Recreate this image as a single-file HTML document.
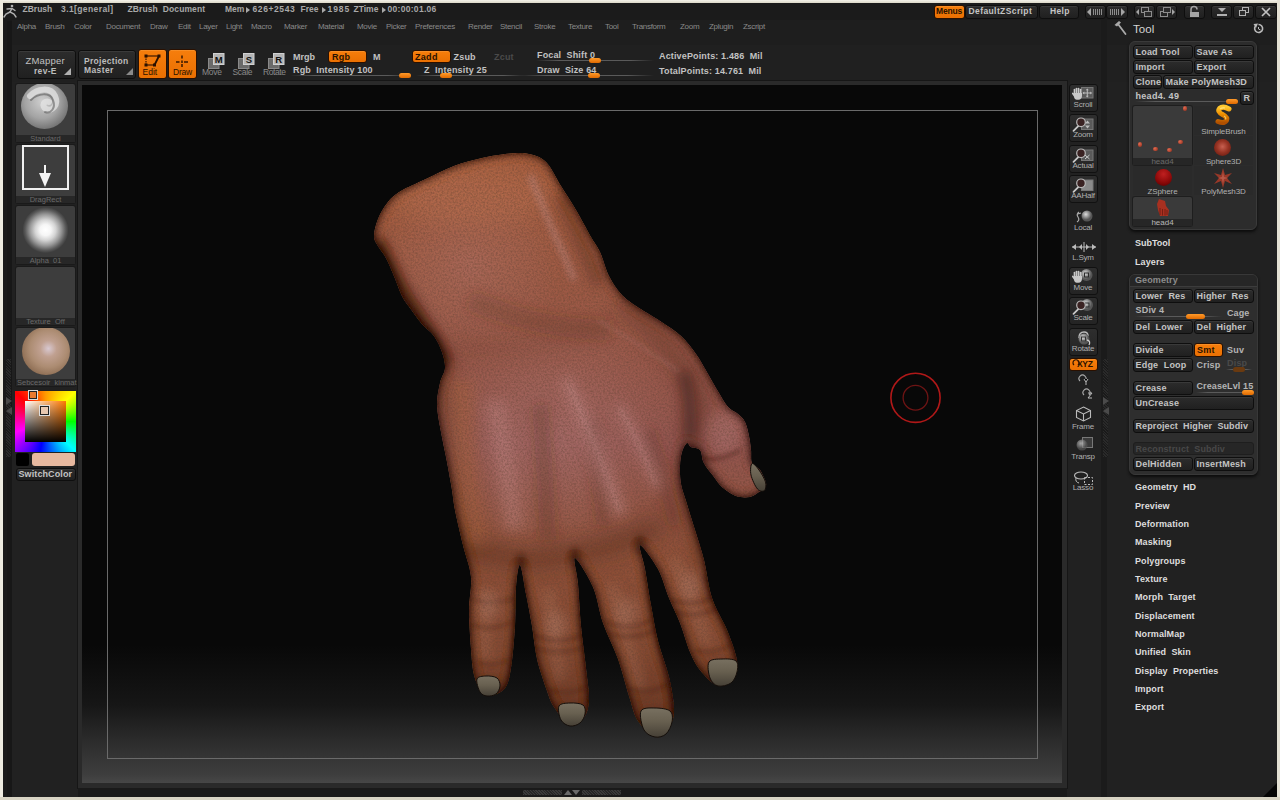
<!DOCTYPE html>
<html><head><meta charset="utf-8"><style>
html,body{margin:0;padding:0;width:1280px;height:800px;overflow:hidden;background:#212121}
.r{position:absolute}
.t{position:absolute;white-space:nowrap;font-family:"Liberation Sans", sans-serif}
svg.r{overflow:visible}
</style></head><body>
<div class="r" style="left:0px;top:0px;width:1280px;height:800px;background:#212121"></div>
<div class="r" style="left:3px;top:3px;width:1274px;height:17px;background:#1b1b1b"></div>
<div class="r" style="left:3px;top:20px;width:1274px;height:25px;background:#1e1e1e"></div>
<div class="r" style="left:3px;top:45px;width:1274px;height:37px;background:#202020"></div>
<div class="r" style="left:3px;top:20px;width:9px;height:777px;background:#1a1a1a"></div>
<div class="r" style="left:7px;top:21px;width:5px;height:776px;background:#171717"></div>
<div class="r" style="left:12px;top:82px;width:66px;height:715px;background:#212121"></div>
<div class="r" style="left:1101px;top:20px;width:6px;height:777px;background:#1b1b1b"></div>
<div class="r" style="left:0px;top:0px;width:1280px;height:3px;background:linear-gradient(#f4f2ea,#dcd8c8)"></div>
<div class="r" style="left:0px;top:0px;width:3px;height:800px;background:#eeebe0"></div>
<div class="r" style="left:1277px;top:0px;width:3px;height:800px;background:#e4e1d4"></div>
<div class="r" style="left:0px;top:797px;width:1280px;height:3px;background:#d8d4c4"></div>
<svg class="r" style="left:1263px;top:783px" width="14" height="14"><polygon points="14,0 14,14 0,14" fill="#050505"/></svg>
<svg class="r" style="left:3px;top:4px" width="15" height="14" viewBox="0 0 15 14">
<g fill="none" stroke="#b0b0b0" stroke-width="1.4" stroke-linecap="round">
<circle cx="9" cy="2" r="1.3" fill="#b0b0b0" stroke="none"/>
<path d="M4 5 L9 4.5 L12 6.5"/><path d="M9 4.5 L7 8 L11 10 L13 13"/><path d="M7 8 L3 10 L1 13"/>
</g></svg>
<div class="t" style="left:22.5px;top:5px;font-size:8.5px;line-height:8.5px;font-weight:bold;color:#a8a8a8;letter-spacing:0px;">ZBrush</div>
<div class="t" style="left:61px;top:5px;font-size:8.5px;line-height:8.5px;font-weight:bold;color:#a8a8a8;letter-spacing:0.4px;">3.1[general]</div>
<div class="t" style="left:127.5px;top:5px;font-size:8.5px;line-height:8.5px;font-weight:bold;color:#a8a8a8;letter-spacing:0.1px;">ZBrush&nbsp;&nbsp;Document</div>
<div class="t" style="left:225px;top:5px;font-size:8.5px;line-height:8.5px;font-weight:bold;color:#a8a8a8;letter-spacing:0px;">Mem</div>
<div class="t" style="left:252.5px;top:5px;font-size:8.5px;line-height:8.5px;font-weight:bold;color:#a8a8a8;letter-spacing:0.6px;">626+2543</div>
<div class="t" style="left:300.5px;top:5px;font-size:8.5px;line-height:8.5px;font-weight:bold;color:#a8a8a8;letter-spacing:0px;">Free</div>
<div class="t" style="left:327.5px;top:5px;font-size:8.5px;line-height:8.5px;font-weight:bold;color:#a8a8a8;letter-spacing:0.9px;">1985</div>
<div class="t" style="left:353.5px;top:5px;font-size:8.5px;line-height:8.5px;font-weight:bold;color:#a8a8a8;letter-spacing:0px;">ZTime</div>
<div class="t" style="left:387.5px;top:5px;font-size:8.5px;line-height:8.5px;font-weight:bold;color:#a8a8a8;letter-spacing:0.3px;">00:00:01.06</div>
<svg class="r" style="left:246px;top:7px" width="5" height="6"><polygon points="0,0 4,3 0,6" fill="#a8a8a8"/></svg>
<svg class="r" style="left:322px;top:7px" width="5" height="6"><polygon points="0,0 4,3 0,6" fill="#a8a8a8"/></svg>
<svg class="r" style="left:382px;top:7px" width="5" height="6"><polygon points="0,0 4,3 0,6" fill="#a8a8a8"/></svg>
<div class="r" style="left:934px;top:5px;width:29px;height:12px;border-radius:3px;background:linear-gradient(#f67e0c,#ea7002);border:1px solid #2a1000;box-shadow:inset 0 1px 0 rgba(255,190,110,.25);"></div>
<div class="t" style="left:936px;top:7px;font-size:8.5px;line-height:8.5px;font-weight:bold;color:#2a1200;letter-spacing:-0.2px;">Menus</div>
<div class="r" style="left:965px;top:5px;width:71px;height:12px;border-radius:3px;background:linear-gradient(#2c2c2c,#202020);border:1px solid #0e0e0e;box-shadow:inset 0 1px 0 rgba(255,255,255,.07);"></div>
<div class="t" style="left:968.5px;top:7px;font-size:8.5px;line-height:8.5px;font-weight:bold;color:#c4c4c4;letter-spacing:0.4px;">DefaultZScript</div>
<div class="r" style="left:1039px;top:5px;width:38px;height:12px;border-radius:3px;background:linear-gradient(#2c2c2c,#202020);border:1px solid #0e0e0e;box-shadow:inset 0 1px 0 rgba(255,255,255,.07);"></div>
<div class="t" style="left:1050px;top:7px;font-size:8.5px;line-height:8.5px;font-weight:bold;color:#c4c4c4;letter-spacing:0.3px;">Help</div>
<div class="r" style="left:1085px;top:5px;width:19px;height:12px;border-radius:3px;background:linear-gradient(#2c2c2c,#202020);border:1px solid #0e0e0e;box-shadow:inset 0 1px 0 rgba(255,255,255,.07);"></div>
<div class="r" style="left:1106px;top:5px;width:20px;height:12px;border-radius:3px;background:linear-gradient(#2c2c2c,#202020);border:1px solid #0e0e0e;box-shadow:inset 0 1px 0 rgba(255,255,255,.07);"></div>
<div class="r" style="left:1134px;top:5px;width:19px;height:12px;border-radius:3px;background:linear-gradient(#2c2c2c,#202020);border:1px solid #0e0e0e;box-shadow:inset 0 1px 0 rgba(255,255,255,.07);"></div>
<div class="r" style="left:1156px;top:5px;width:19px;height:12px;border-radius:3px;background:linear-gradient(#2c2c2c,#202020);border:1px solid #0e0e0e;box-shadow:inset 0 1px 0 rgba(255,255,255,.07);"></div>
<div class="r" style="left:1184px;top:5px;width:19px;height:12px;border-radius:3px;background:linear-gradient(#2c2c2c,#202020);border:1px solid #0e0e0e;box-shadow:inset 0 1px 0 rgba(255,255,255,.07);"></div>
<div class="r" style="left:1211px;top:5px;width:19px;height:12px;border-radius:3px;background:linear-gradient(#2c2c2c,#202020);border:1px solid #0e0e0e;box-shadow:inset 0 1px 0 rgba(255,255,255,.07);"></div>
<div class="r" style="left:1233px;top:5px;width:19px;height:12px;border-radius:3px;background:linear-gradient(#2c2c2c,#202020);border:1px solid #0e0e0e;box-shadow:inset 0 1px 0 rgba(255,255,255,.07);"></div>
<div class="r" style="left:1255px;top:5px;width:20px;height:12px;border-radius:3px;background:linear-gradient(#2c2c2c,#202020);border:1px solid #0e0e0e;box-shadow:inset 0 1px 0 rgba(255,255,255,.07);"></div>
<svg class="r" style="left:1087px;top:7px" width="18" height="10"><polygon points="0,5 4,1 4,9" fill="#a4a4a4"/><g stroke="#8c8c8c" stroke-width="1"><line x1="6.5" y1="2" x2="6.5" y2="8"/><line x1="8.5" y1="2" x2="8.5" y2="8"/><line x1="10.5" y1="2" x2="10.5" y2="8"/><line x1="12.5" y1="2" x2="12.5" y2="8"/><line x1="14.5" y1="2" x2="14.5" y2="8"/></g></svg>
<svg class="r" style="left:1108px;top:7px" width="18" height="10"><g stroke="#8c8c8c" stroke-width="1"><line x1="2.5" y1="2" x2="2.5" y2="8"/><line x1="4.5" y1="2" x2="4.5" y2="8"/><line x1="6.5" y1="2" x2="6.5" y2="8"/><line x1="8.5" y1="2" x2="8.5" y2="8"/><line x1="10.5" y1="2" x2="10.5" y2="8"/></g><polygon points="17,5 13,1 13,9" fill="#a4a4a4"/></svg>
<svg class="r" style="left:1136px;top:6px" width="18" height="12"><polygon points="0,6 3,3 3,9" fill="#a4a4a4"/><rect x="5.5" y="1.5" width="7" height="5" fill="none" stroke="#8c8c8c"/><rect x="8.5" y="5.5" width="7" height="5" fill="#2a2a2a" stroke="#8c8c8c"/></svg>
<svg class="r" style="left:1158px;top:6px" width="18" height="12"><rect x="2.5" y="5.5" width="7" height="5" fill="none" stroke="#8c8c8c"/><rect x="5.5" y="1.5" width="7" height="5" fill="#2a2a2a" stroke="#8c8c8c"/><polygon points="17,6 14,3 14,9" fill="#a4a4a4"/></svg>
<svg class="r" style="left:1188px;top:6px" width="14" height="12"><path d="M3 6 V3.5 A3 3 0 0 1 9 3.5" fill="none" stroke="#a4a4a4" stroke-width="1.5"/><rect x="2" y="6" width="9" height="5" fill="#a4a4a4"/></svg>
<svg class="r" style="left:1216px;top:7px" width="12" height="10"><polygon points="2,1 10,1 6,5" fill="#b0b0b0"/><rect x="1" y="7" width="10" height="2" fill="#b0b0b0"/></svg>
<svg class="r" style="left:1238px;top:6px" width="12" height="12"><rect x="4.5" y="1.5" width="6" height="5" fill="none" stroke="#b0b0b0"/><rect x="1.5" y="4.5" width="6" height="5" fill="#2a2a2a" stroke="#b0b0b0"/></svg>
<svg class="r" style="left:1260px;top:6px" width="12" height="12"><path d="M2 2 L10 10 M10 2 L2 10" stroke="#c0c0c0" stroke-width="1.7"/></svg>
<div class="t" style="left:17px;top:23px;font-size:8px;line-height:8px;font-weight:normal;color:#8a8a8a;letter-spacing:-0.3px;">Alpha</div>
<div class="t" style="left:45px;top:23px;font-size:8px;line-height:8px;font-weight:normal;color:#8a8a8a;letter-spacing:-0.3px;">Brush</div>
<div class="t" style="left:74px;top:23px;font-size:8px;line-height:8px;font-weight:normal;color:#8a8a8a;letter-spacing:-0.3px;">Color</div>
<div class="t" style="left:106px;top:23px;font-size:8px;line-height:8px;font-weight:normal;color:#8a8a8a;letter-spacing:-0.3px;">Document</div>
<div class="t" style="left:150px;top:23px;font-size:8px;line-height:8px;font-weight:normal;color:#8a8a8a;letter-spacing:-0.3px;">Draw</div>
<div class="t" style="left:178px;top:23px;font-size:8px;line-height:8px;font-weight:normal;color:#8a8a8a;letter-spacing:-0.3px;">Edit</div>
<div class="t" style="left:199px;top:23px;font-size:8px;line-height:8px;font-weight:normal;color:#8a8a8a;letter-spacing:-0.3px;">Layer</div>
<div class="t" style="left:226px;top:23px;font-size:8px;line-height:8px;font-weight:normal;color:#8a8a8a;letter-spacing:-0.3px;">Light</div>
<div class="t" style="left:251px;top:23px;font-size:8px;line-height:8px;font-weight:normal;color:#8a8a8a;letter-spacing:-0.3px;">Macro</div>
<div class="t" style="left:284px;top:23px;font-size:8px;line-height:8px;font-weight:normal;color:#8a8a8a;letter-spacing:-0.3px;">Marker</div>
<div class="t" style="left:318px;top:23px;font-size:8px;line-height:8px;font-weight:normal;color:#8a8a8a;letter-spacing:-0.3px;">Material</div>
<div class="t" style="left:357px;top:23px;font-size:8px;line-height:8px;font-weight:normal;color:#8a8a8a;letter-spacing:-0.3px;">Movie</div>
<div class="t" style="left:386px;top:23px;font-size:8px;line-height:8px;font-weight:normal;color:#8a8a8a;letter-spacing:-0.3px;">Picker</div>
<div class="t" style="left:415px;top:23px;font-size:8px;line-height:8px;font-weight:normal;color:#8a8a8a;letter-spacing:-0.3px;">Preferences</div>
<div class="t" style="left:468px;top:23px;font-size:8px;line-height:8px;font-weight:normal;color:#8a8a8a;letter-spacing:-0.3px;">Render</div>
<div class="t" style="left:500px;top:23px;font-size:8px;line-height:8px;font-weight:normal;color:#8a8a8a;letter-spacing:-0.3px;">Stencil</div>
<div class="t" style="left:534px;top:23px;font-size:8px;line-height:8px;font-weight:normal;color:#8a8a8a;letter-spacing:-0.3px;">Stroke</div>
<div class="t" style="left:568px;top:23px;font-size:8px;line-height:8px;font-weight:normal;color:#8a8a8a;letter-spacing:-0.3px;">Texture</div>
<div class="t" style="left:605px;top:23px;font-size:8px;line-height:8px;font-weight:normal;color:#8a8a8a;letter-spacing:-0.3px;">Tool</div>
<div class="t" style="left:632px;top:23px;font-size:8px;line-height:8px;font-weight:normal;color:#8a8a8a;letter-spacing:-0.3px;">Transform</div>
<div class="t" style="left:680px;top:23px;font-size:8px;line-height:8px;font-weight:normal;color:#8a8a8a;letter-spacing:-0.3px;">Zoom</div>
<div class="t" style="left:709px;top:23px;font-size:8px;line-height:8px;font-weight:normal;color:#8a8a8a;letter-spacing:-0.3px;">Zplugin</div>
<div class="t" style="left:743px;top:23px;font-size:8px;line-height:8px;font-weight:normal;color:#8a8a8a;letter-spacing:-0.3px;">Zscript</div>
<div class="r" style="left:17px;top:50px;width:57px;height:27px;border-radius:3px;background:linear-gradient(#2c2c2c,#202020);border:1px solid #0e0e0e;box-shadow:inset 0 1px 0 rgba(255,255,255,.07);"></div>
<div class="t" style="left:25.5px;top:56px;font-size:9.5px;line-height:9.5px;font-weight:normal;color:#c0c0c0;letter-spacing:0.2px;">ZMapper</div>
<div class="t" style="left:34px;top:67px;font-size:8.5px;line-height:8.5px;font-weight:bold;color:#bdbdbd;letter-spacing:0.3px;">rev-E</div>
<svg class="r" style="left:64px;top:68px" width="8" height="8"><polygon points="7,0 7,7 0,7" fill="#b0b0b0"/></svg>
<div class="r" style="left:78px;top:50px;width:56px;height:27px;border-radius:3px;background:linear-gradient(#2c2c2c,#202020);border:1px solid #0e0e0e;box-shadow:inset 0 1px 0 rgba(255,255,255,.07);"></div>
<div class="t" style="left:84px;top:56.5px;font-size:8.5px;line-height:8.5px;font-weight:bold;color:#bdbdbd;letter-spacing:0.3px;">Projection</div>
<div class="t" style="left:84px;top:66px;font-size:8.5px;line-height:8.5px;font-weight:bold;color:#bdbdbd;letter-spacing:0.4px;">Master</div>
<svg class="r" style="left:126px;top:68px" width="8" height="8"><polygon points="7,0 7,7 0,7" fill="#8a8a8a"/></svg>
<div class="r" style="left:138px;top:49px;width:27px;height:28px;border-radius:3px;background:linear-gradient(#f67e0c,#ea7002);border:1px solid #2a1000;box-shadow:inset 0 1px 0 rgba(255,190,110,.25);"></div>
<div class="r" style="left:168px;top:49px;width:27px;height:28px;border-radius:3px;background:linear-gradient(#f67e0c,#ea7002);border:1px solid #2a1000;box-shadow:inset 0 1px 0 rgba(255,190,110,.25);"></div>
<svg class="r" style="left:140px;top:52px" width="24" height="16"><g stroke="#2a1000" stroke-width="1.1"><line x1="6" y1="4" x2="19" y2="4"/><line x1="6" y1="4" x2="6" y2="13" stroke-dasharray="1.5 1"/><line x1="6" y1="13" x2="14.5" y2="13"/><line x1="19" y1="4" x2="14.5" y2="13" stroke-width="1.8"/></g><g fill="#2a1000"><rect x="4.5" y="2.5" width="3" height="3"/><rect x="17.5" y="2.5" width="3" height="3"/><rect x="4.5" y="11.5" width="3" height="3"/><rect x="13" y="11.5" width="3" height="3"/></g></svg>
<svg class="r" style="left:174px;top:54px" width="16" height="15"><g stroke="#2a1000" stroke-width="1.4"><line x1="8" y1="1.5" x2="8" y2="4.5"/><line x1="8" y1="6.5" x2="8" y2="9"/><line x1="8" y1="10" x2="8" y2="13"/><line x1="2" y1="8" x2="5.5" y2="8"/><line x1="10" y1="8" x2="14" y2="8"/></g></svg>
<div class="t" style="left:142.5px;top:68px;font-size:8.5px;line-height:8.5px;font-weight:normal;color:#2a1000;letter-spacing:0px;">Edit</div>
<div class="t" style="left:173px;top:68px;font-size:8.5px;line-height:8.5px;font-weight:normal;color:#2a1000;letter-spacing:-0.2px;">Draw</div>
<svg class="r" style="left:207.5px;top:52.5px" width="18" height="17"><rect x="0.5" y="5.5" width="10.5" height="10" fill="#6a6a6a" stroke="#8a8a8a"/><rect x="5.5" y="0.5" width="10.5" height="11" fill="#b4b4b4" stroke="#d0d0d0"/><text x="10.8" y="9.6" font-family="Liberation Sans" font-weight="bold" font-size="9.5" text-anchor="middle" fill="#111">M</text></svg>
<svg class="r" style="left:237.5px;top:52.5px" width="18" height="17"><rect x="0.5" y="5.5" width="10.5" height="10" fill="#6a6a6a" stroke="#8a8a8a"/><rect x="5.5" y="0.5" width="10.5" height="11" fill="#b4b4b4" stroke="#d0d0d0"/><text x="10.8" y="9.6" font-family="Liberation Sans" font-weight="bold" font-size="9.5" text-anchor="middle" fill="#111">S</text></svg>
<svg class="r" style="left:267.5px;top:52.5px" width="18" height="17"><rect x="0.5" y="5.5" width="10.5" height="10" fill="#6a6a6a" stroke="#8a8a8a"/><rect x="5.5" y="0.5" width="10.5" height="11" fill="#b4b4b4" stroke="#d0d0d0"/><text x="10.8" y="9.6" font-family="Liberation Sans" font-weight="bold" font-size="9.5" text-anchor="middle" fill="#111">R</text></svg>
<div class="t" style="left:202px;top:67.5px;font-size:8.5px;line-height:8.5px;font-weight:normal;color:#8a8a8a;letter-spacing:-0.3px;">Move</div>
<div class="t" style="left:232.5px;top:67.5px;font-size:8.5px;line-height:8.5px;font-weight:normal;color:#8a8a8a;letter-spacing:-0.3px;">Scale</div>
<div class="t" style="left:263px;top:67.5px;font-size:8.5px;line-height:8.5px;font-weight:normal;color:#8a8a8a;letter-spacing:-0.4px;">Rotate</div>
<div class="t" style="left:293px;top:52.5px;font-size:9px;line-height:9px;font-weight:bold;color:#c2c2c2;letter-spacing:0px;">Mrgb</div>
<div class="r" style="left:328px;top:50px;width:37px;height:11px;border-radius:3px;background:linear-gradient(#f67e0c,#ea7002);border:1px solid #2a1000;box-shadow:inset 0 1px 0 rgba(255,190,110,.25);"></div>
<div class="t" style="left:332px;top:52.5px;font-size:9px;line-height:9px;font-weight:bold;color:#2a1200;letter-spacing:0.3px;">Rgb</div>
<div class="t" style="left:373px;top:52.5px;font-size:9px;line-height:9px;font-weight:bold;color:#c2c2c2;letter-spacing:0px;">M</div>
<div class="r" style="left:412px;top:50px;width:37px;height:11px;border-radius:3px;background:linear-gradient(#f67e0c,#ea7002);border:1px solid #2a1000;box-shadow:inset 0 1px 0 rgba(255,190,110,.25);"></div>
<div class="t" style="left:415px;top:52.5px;font-size:9px;line-height:9px;font-weight:bold;color:#2a1200;letter-spacing:0.3px;">Zadd</div>
<div class="t" style="left:453.5px;top:52.5px;font-size:9px;line-height:9px;font-weight:bold;color:#c2c2c2;letter-spacing:0.2px;">Zsub</div>
<div class="t" style="left:494px;top:52.5px;font-size:9px;line-height:9px;font-weight:bold;color:#4a4a4a;letter-spacing:0.2px;">Zcut</div>
<div class="t" style="left:293px;top:66px;font-size:9px;line-height:9px;font-weight:bold;color:#c2c2c2;letter-spacing:0.15px;">Rgb&nbsp;&nbsp;Intensity 100</div>
<div class="t" style="left:424px;top:66px;font-size:9px;line-height:9px;font-weight:bold;color:#c2c2c2;letter-spacing:0.2px;">Z&nbsp;&nbsp;Intensity 25</div>
<div class="r" style="left:290px;top:75px;width:122px;height:1px;background:linear-gradient(90deg,rgba(90,90,90,0),#5a5a5a 20%,#5a5a5a 80%,rgba(90,90,90,0))"></div>
<div class="r" style="left:399px;top:73px;width:12px;height:5px;border-radius:3px;background:linear-gradient(#ff9a2a,#e06a00)"></div>
<div class="r" style="left:416px;top:75px;width:109px;height:1px;background:linear-gradient(90deg,rgba(90,90,90,0),#5a5a5a 20%,#5a5a5a 80%,rgba(90,90,90,0))"></div>
<div class="r" style="left:440px;top:73px;width:12px;height:5px;border-radius:3px;background:linear-gradient(#ff9a2a,#e06a00)"></div>
<div class="t" style="left:537px;top:51px;font-size:9px;line-height:9px;font-weight:bold;color:#c2c2c2;letter-spacing:0.15px;">Focal&nbsp;&nbsp;Shift 0</div>
<div class="t" style="left:537px;top:66px;font-size:9px;line-height:9px;font-weight:bold;color:#c2c2c2;letter-spacing:0.15px;">Draw&nbsp;&nbsp;Size 64</div>
<div class="r" style="left:536px;top:60px;width:118px;height:1px;background:linear-gradient(90deg,rgba(90,90,90,0),#5a5a5a 20%,#5a5a5a 80%,rgba(90,90,90,0))"></div>
<div class="r" style="left:589px;top:58px;width:12px;height:5px;border-radius:3px;background:linear-gradient(#ff9a2a,#e06a00)"></div>
<div class="r" style="left:520px;top:75px;width:134px;height:1px;background:linear-gradient(90deg,rgba(90,90,90,0),#5a5a5a 20%,#5a5a5a 80%,rgba(90,90,90,0))"></div>
<div class="r" style="left:588px;top:73px;width:12px;height:5px;border-radius:3px;background:linear-gradient(#ff9a2a,#e06a00)"></div>
<div class="t" style="left:659px;top:52px;font-size:9px;line-height:9px;font-weight:bold;color:#c2c2c2;letter-spacing:0.15px;">ActivePoints: 1.486&nbsp;&nbsp;Mil</div>
<div class="t" style="left:659px;top:67px;font-size:9px;line-height:9px;font-weight:bold;color:#c2c2c2;letter-spacing:0.15px;">TotalPoints: 14.761&nbsp;&nbsp;Mil</div>
<div class="r" style="left:16px;top:84px;width:59px;height:58px;background:#3d3d3d;border-radius:2px;box-shadow:0 0 0 1px #1a1a1a"></div>
<div class="r" style="left:16px;top:135px;width:59px;height:7px;background:#272727"></div>
<div class="t" style="left:17px;top:135px;font-size:7.5px;line-height:7.5px;font-weight:normal;color:#6a6a6a;letter-spacing:0px;width:57px;text-align:center">Standard</div>
<div class="r" style="left:16px;top:84px;width:59px;height:51px;overflow:hidden"><div class="r" style="left:5px;top:-1.5px;width:47px;height:46px;border-radius:50%;background:radial-gradient(circle at 45% 40%,#cfcfcf,#a4a4a4 45%,#6a6a6a 80%,#484848)"></div><svg class="r" style="left:5px;top:-1.5px" width="47" height="46"><g fill="none" stroke-linecap="round"><path d="M9 13 C16 5 30 4 34 13 C38 22 31 29 25 26 C20 23 23 17 28 19" stroke="#e4e4e4" stroke-width="6" opacity=".75"/><path d="M10 17 C17 10 29 9 32 17 C35 25 30 31 24 29" stroke="#4a4a4a" stroke-width="2" opacity=".5"/></g></svg></div>
<div class="r" style="left:16px;top:145px;width:59px;height:58px;background:#3d3d3d;border-radius:2px;box-shadow:0 0 0 1px #1a1a1a"></div>
<div class="r" style="left:16px;top:196px;width:59px;height:7px;background:#272727"></div>
<div class="t" style="left:17px;top:196px;font-size:7.5px;line-height:7.5px;font-weight:normal;color:#6a6a6a;letter-spacing:0px;width:57px;text-align:center">DragRect</div>
<div class="r" style="left:22px;top:145px;width:47px;height:45px;border:2px solid #f0f0f0;box-sizing:border-box"></div>
<svg class="r" style="left:39px;top:165px" width="12" height="23"><rect x="5" y="0" width="2" height="10" fill="#f4f4f4"/><polygon points="0,8 12,8 6,22" fill="#f4f4f4"/></svg>
<div class="r" style="left:16px;top:206px;width:59px;height:58px;background:#3d3d3d;border-radius:2px;box-shadow:0 0 0 1px #1a1a1a"></div>
<div class="r" style="left:16px;top:257px;width:59px;height:7px;background:#272727"></div>
<div class="t" style="left:17px;top:257px;font-size:7.5px;line-height:7.5px;font-weight:normal;color:#6a6a6a;letter-spacing:0px;width:57px;text-align:center">Alpha&nbsp;&nbsp;01</div>
<div class="r" style="left:16px;top:206px;width:59px;height:51px;background:radial-gradient(circle 23px at 29.5px 24px,#ffffff 0,#f6f6f6 24%,#d4d4d4 45%,#989898 68%,#5a5a5a 88%,rgba(61,61,61,0) 100%)"></div>
<div class="r" style="left:16px;top:267px;width:59px;height:58px;background:#3d3d3d;border-radius:2px;box-shadow:0 0 0 1px #1a1a1a"></div>
<div class="r" style="left:16px;top:318px;width:59px;height:7px;background:#272727"></div>
<div class="t" style="left:17px;top:318px;font-size:7.5px;line-height:7.5px;font-weight:normal;color:#6a6a6a;letter-spacing:0px;width:57px;text-align:center">Texture&nbsp;&nbsp;Off</div>
<div class="r" style="left:16px;top:328px;width:59px;height:58px;background:#3d3d3d;border-radius:2px;box-shadow:0 0 0 1px #1a1a1a"></div>
<div class="r" style="left:16px;top:379px;width:59px;height:7px;background:#272727"></div>
<div class="t" style="left:17px;top:379px;font-size:7.5px;line-height:7.5px;font-weight:normal;color:#6a6a6a;letter-spacing:0px;width:57px;text-align:center">Sebcesoir&nbsp;&nbsp;kinmat</div>
<div class="r" style="left:16px;top:328px;width:59px;height:51px;overflow:hidden"><div class="r" style="left:5.5px;top:-1px;width:48px;height:48px;border-radius:50%;background:radial-gradient(circle at 55% 45%,#d8c8d0 0,#c0a090 22%,#ac8c72 50%,#86664c 80%,#5a4230 100%)"></div></div>
<div class="r" style="left:15px;top:391px;width:61px;height:61px;background:conic-gradient(from 0deg,#ff9900 0deg,#ffff00 45deg,#00ff00 90deg,#00ffff 135deg,#0000ff 190deg,#ff00ff 250deg,#ff0000 315deg,#ff9900 360deg)"></div>
<div class="r" style="left:25px;top:401px;width:41px;height:41px;background:linear-gradient(rgba(0,0,0,0),#000),linear-gradient(90deg,#fff,#ff7800)"></div>
<div class="r" style="left:29px;top:391px;width:8px;height:8px;background:#e87a30;border:1px solid #222;box-sizing:border-box;outline:1px solid #ddd"></div>
<div class="r" style="left:40px;top:406px;width:9px;height:9px;background:#e8c8b0;border:1px solid #222;box-sizing:border-box;outline:1px solid #ddd"></div>
<div class="r" style="left:16px;top:453px;width:13px;height:13px;background:#000;border-radius:2px"></div>
<div class="r" style="left:32px;top:453px;width:43px;height:13px;background:#e8b9a0;border-radius:3px;box-shadow:0 0 0 1px #222"></div>
<div class="r" style="left:16px;top:468px;width:58px;height:11px;border-radius:3px;background:linear-gradient(#2c2c2c,#202020);border:1px solid #0e0e0e;box-shadow:inset 0 1px 0 rgba(255,255,255,.07);"></div>
<div class="t" style="left:18.5px;top:470px;font-size:9px;line-height:9px;font-weight:bold;color:#c4c4c4;letter-spacing:0.1px;">SwitchColor</div>
<div class="r" style="left:6px;top:359px;width:5px;height:98px;background:repeating-linear-gradient(45deg,#2a2a2a 0 1px,#1a1a1a 1px 2px)"></div>
<svg class="r" style="left:5px;top:397px" width="7" height="20"><polygon points="1,0 7,4 1,8" fill="#4a4a4a"/><polygon points="7,10 1,14 7,18" fill="#4a4a4a"/></svg>
<div class="r" style="left:78px;top:81px;width:989px;height:707px;background:#2a2a2a;box-shadow:0 0 0 1px #161616"></div>
<div class="r" style="left:82px;top:85px;width:980px;height:698px;background:linear-gradient(#080808 0,#080808 560px,#161616 620px,#2e2e2e 660px,#3e3e3e 690px,#474747 698px)"></div>
<div class="r" style="left:107px;top:110px;width:931px;height:649px;border:1px solid #6a6a6a;box-sizing:border-box"></div>
<svg class="r" style="left:885px;top:367px" width="62" height="62"><circle cx="30.5" cy="30.8" r="24.6" fill="none" stroke="#b01818" stroke-width="1.6"/><circle cx="30.5" cy="30.8" r="12.4" fill="none" stroke="#6e1414" stroke-width="1.3"/></svg>
<div class="r" style="left:78px;top:788px;width:989px;height:9px;background:#1a1a1a"></div>
<div class="r" style="left:523px;top:790px;width:39px;height:5px;background:repeating-linear-gradient(45deg,#3a3a3a 0 1px,#262626 1px 2px)"></div>
<div class="r" style="left:582px;top:790px;width:39px;height:5px;background:repeating-linear-gradient(45deg,#3a3a3a 0 1px,#262626 1px 2px)"></div>
<svg class="r" style="left:563px;top:789px" width="18" height="7"><polygon points="1,6 5,1 9,6" fill="#6a6a6a"/><polygon points="9,1 17,1 13,6" fill="#6a6a6a"/></svg>
<div class="r" style="left:1069px;top:84px;width:27px;height:26px;border-radius:3px;background:linear-gradient(#2e2e2e,#242424);border:1px solid #111"></div>
<div class="r" style="left:1069px;top:114px;width:27px;height:26px;border-radius:3px;background:linear-gradient(#2e2e2e,#242424);border:1px solid #111"></div>
<div class="r" style="left:1069px;top:145px;width:27px;height:26px;border-radius:3px;background:linear-gradient(#2e2e2e,#242424);border:1px solid #111"></div>
<div class="r" style="left:1069px;top:175px;width:27px;height:26px;border-radius:3px;background:linear-gradient(#2e2e2e,#242424);border:1px solid #111"></div>
<div class="r" style="left:1069px;top:267px;width:27px;height:26px;border-radius:3px;background:linear-gradient(#2e2e2e,#242424);border:1px solid #111"></div>
<div class="r" style="left:1069px;top:297px;width:27px;height:26px;border-radius:3px;background:linear-gradient(#2e2e2e,#242424);border:1px solid #111"></div>
<div class="r" style="left:1069px;top:328px;width:27px;height:26px;border-radius:3px;background:linear-gradient(#2e2e2e,#242424);border:1px solid #111"></div>
<div class="t" style="left:1069px;top:101px;width:28px;text-align:center;font-size:8px;line-height:8px;font-weight:normal;color:#b0b0b0;letter-spacing:-0.2px">Scroll</div>
<div class="t" style="left:1069px;top:131px;width:28px;text-align:center;font-size:8px;line-height:8px;font-weight:normal;color:#b0b0b0;letter-spacing:-0.2px">Zoom</div>
<div class="t" style="left:1069px;top:162px;width:28px;text-align:center;font-size:8px;line-height:8px;font-weight:normal;color:#b0b0b0;letter-spacing:-0.2px">Actual</div>
<div class="t" style="left:1069px;top:192px;width:28px;text-align:center;font-size:8px;line-height:8px;font-weight:normal;color:#b0b0b0;letter-spacing:-0.2px">AAHalf</div>
<div class="t" style="left:1069px;top:224px;width:28px;text-align:center;font-size:8px;line-height:8px;font-weight:normal;color:#b0b0b0;letter-spacing:-0.2px">Local</div>
<div class="t" style="left:1069px;top:254px;width:28px;text-align:center;font-size:8px;line-height:8px;font-weight:normal;color:#b0b0b0;letter-spacing:-0.2px">L.Sym</div>
<div class="t" style="left:1069px;top:284px;width:28px;text-align:center;font-size:8px;line-height:8px;font-weight:normal;color:#b0b0b0;letter-spacing:-0.2px">Move</div>
<div class="t" style="left:1069px;top:314px;width:28px;text-align:center;font-size:8px;line-height:8px;font-weight:normal;color:#b0b0b0;letter-spacing:-0.2px">Scale</div>
<div class="t" style="left:1069px;top:345px;width:28px;text-align:center;font-size:8px;line-height:8px;font-weight:normal;color:#b0b0b0;letter-spacing:-0.2px">Rotate</div>
<div class="t" style="left:1069px;top:423px;width:28px;text-align:center;font-size:8px;line-height:8px;font-weight:normal;color:#b0b0b0;letter-spacing:-0.2px">Frame</div>
<div class="t" style="left:1069px;top:453px;width:28px;text-align:center;font-size:8px;line-height:8px;font-weight:normal;color:#b0b0b0;letter-spacing:-0.2px">Transp</div>
<div class="t" style="left:1069px;top:484px;width:28px;text-align:center;font-size:8px;line-height:8px;font-weight:normal;color:#b0b0b0;letter-spacing:-0.2px">Lasso</div>
<svg class="r" style="left:1066px;top:82px" width="34" height="20"><rect x="15.5" y="5.5" width="11.5" height="10.5" fill="#5a5a5a" stroke="#767676"/><path d="M21.3 7 V15 M17 11 H25.5" stroke="#bbb" stroke-width="1"/><path d="M21.3 6.5 l-1.5 1.8 h3z M21.3 15.5 l-1.5 -1.8 h3z M16.5 11 l1.8 -1.5 v3z M26 11 l-1.8 -1.5 v3z" fill="#bbb"/><g stroke="#c8c8c8" stroke-width="1.7" stroke-linecap="round"><line x1="8.5" y1="7.5" x2="8.5" y2="12"/><line x1="10.5" y1="6.5" x2="10.5" y2="12"/><line x1="12.5" y1="6.5" x2="12.5" y2="12"/><line x1="14.5" y1="7.5" x2="14.5" y2="12"/><line x1="9" y1="14.5" x2="6.8" y2="11.5"/></g><path d="M7.8 11 H16 V14 Q15.5 17.8 12.5 17.8 H10.5 Q8.5 17.5 8 15 Z" fill="#c8c8c8"/></svg>
<svg class="r" style="left:1066px;top:112px" width="34" height="20"><rect x="15.5" y="7" width="11.5" height="10.5" fill="#5a5a5a" stroke="#767676"/><path d="M21.5 8.5 l-2.5 3 h5z M21.5 16.5 l-2.5 -3 h5z" fill="#bbb"/><line x1="12.5" y1="13.8" x2="7.5" y2="18.8" stroke="#c8c8c8" stroke-width="1.8" stroke-linecap="round"/><circle cx="15" cy="10.3" r="4.3" fill="#3a2222" stroke="#b8b8b8" stroke-width="1.2"/></svg>
<svg class="r" style="left:1066px;top:143px" width="34" height="20"><rect x="15.5" y="7" width="11.5" height="10.5" fill="#5a5a5a" stroke="#767676"/><path d="M19 12 l4.5 4 M23.5 12 l-4.5 4" stroke="#ccc" stroke-width="1"/><line x1="12.5" y1="13.8" x2="7.5" y2="18.8" stroke="#c8c8c8" stroke-width="1.8" stroke-linecap="round"/><circle cx="15" cy="10.3" r="4.3" fill="#3a2222" stroke="#b8b8b8" stroke-width="1.2"/></svg>
<svg class="r" style="left:1066px;top:173px" width="34" height="20"><rect x="15.5" y="7" width="11.5" height="10.5" fill="#8a8a8a" stroke="#767676"/><line x1="12.5" y1="13.8" x2="7.5" y2="18.8" stroke="#c8c8c8" stroke-width="1.8" stroke-linecap="round"/><circle cx="15" cy="10.3" r="4.3" fill="#3a2222" stroke="#b8b8b8" stroke-width="1.2"/></svg>
<svg class="r" style="left:1073px;top:209px" width="22" height="14"><circle cx="14" cy="7" r="5.5" fill="url(#gball)"/><path d="M6 3 Q3 5 5 8 Q7 11 4 13 M5 5 L8 4" stroke="#aaa" stroke-width="1.2" fill="none"/><defs><radialGradient id="gball" cx="40%" cy="35%"><stop offset="0" stop-color="#ddd"/><stop offset="1" stop-color="#555"/></radialGradient></defs></svg>
<svg class="r" style="left:1071px;top:242px" width="26" height="10"><path d="M1 5 H25" stroke="#bbb"/><path d="M13 0 V10" stroke="#bbb"/><polygon points="1,5 5,2 5,8" fill="#bbb"/><polygon points="25,5 21,2 21,8" fill="#bbb"/><polygon points="8,5 11,2 11,8" fill="#bbb"/><polygon points="18,5 15,2 15,8" fill="#bbb"/></svg>
<svg class="r" style="left:1066px;top:265px" width="34" height="20"><circle cx="20.5" cy="10" r="6" fill="url(#gball)"/><rect x="18.5" y="8" width="4" height="4" fill="none" stroke="#2a2a2a"/><g stroke="#c8c8c8" stroke-width="1.7" stroke-linecap="round"><line x1="8.5" y1="7.5" x2="8.5" y2="12"/><line x1="10.5" y1="6.5" x2="10.5" y2="12"/><line x1="12.5" y1="6.5" x2="12.5" y2="12"/><line x1="14.5" y1="7.5" x2="14.5" y2="12"/><line x1="9" y1="14.5" x2="6.8" y2="11.5"/></g><path d="M7.8 11 H16 V14 Q15.5 17.8 12.5 17.8 H10.5 Q8.5 17.5 8 15 Z" fill="#c8c8c8"/></svg>
<svg class="r" style="left:1066px;top:295px" width="34" height="20"><circle cx="21" cy="10" r="6" fill="url(#gball)"/><rect x="19" y="8" width="4" height="4" fill="none" stroke="#2a2a2a"/><line x1="12.5" y1="13.8" x2="7.5" y2="18.8" stroke="#c8c8c8" stroke-width="1.8" stroke-linecap="round"/><circle cx="15" cy="10.3" r="4.3" fill="#3a2222" stroke="#b8b8b8" stroke-width="1.2"/></svg>
<svg class="r" style="left:1075px;top:330px" width="18" height="16"><path d="M4 8 Q4 2 9 2 Q13 2 13 6" stroke="#bbb" stroke-width="1.5" fill="none"/><circle cx="9" cy="9" r="5.5" fill="url(#gball)"/><rect x="6.5" y="7" width="4" height="4" fill="none" stroke="#333"/><path d="M12 10 Q16 11 14 15" stroke="#ccc" stroke-width="1.3" fill="none"/></svg>
<div class="r" style="left:1069px;top:358px;width:27px;height:11px;border-radius:3px;background:linear-gradient(#f67e0c,#ea7002);border:1px solid #2a1000;box-shadow:inset 0 1px 0 rgba(255,190,110,.25);"></div>
<svg class="r" style="left:1073px;top:359px" width="6" height="9"><path d="M1 6 A3 3 0 1 1 5 6" stroke="#2a1200" stroke-width="1.2" fill="none"/></svg>
<div class="t" style="left:1077px;top:360px;font-size:8.5px;line-height:8.5px;font-weight:bold;color:#2a1200;letter-spacing:-0.3px;">XYZ</div>
<svg class="r" style="left:1078px;top:374px" width="12" height="11"><path d="M2 7 A3.5 3.5 0 1 1 7 7" stroke="#aaa" stroke-width="1.1" fill="none"/><path d="M6 5 L8 8 L10 5 M8 8 V11" stroke="#bbb" stroke-width="1"/></svg>
<svg class="r" style="left:1082px;top:388px" width="12" height="11"><path d="M2 7 A3.5 3.5 0 1 1 7 7" stroke="#aaa" stroke-width="1.1" fill="none"/><path d="M6 5 H10 L6 10 H10" stroke="#bbb" stroke-width="1" fill="none"/></svg>
<svg class="r" style="left:1075px;top:406px" width="17" height="16"><path d="M8.5 1 L15.5 4.5 V11.5 L8.5 15 L1.5 11.5 V4.5 Z M1.5 4.5 L8.5 8 L15.5 4.5 M8.5 8 V15" stroke="#bbb" stroke-width="1.1" fill="none"/></svg>
<svg class="r" style="left:1074px;top:437px" width="20" height="14"><rect x="8.5" y="0.5" width="10" height="10" fill="#3a3a3a" stroke="#777"/><circle cx="8" cy="8" r="5.5" fill="url(#gball)" opacity=".7"/></svg>
<svg class="r" style="left:1073px;top:471px" width="22" height="14"><ellipse cx="8" cy="4.5" rx="6.5" ry="3.5" stroke="#bbb" stroke-width="1.1" fill="none"/><path d="M3 7 Q2 11 6 12" stroke="#bbb" fill="none"/><rect x="11.5" y="6.5" width="8" height="7" stroke="#bbb" stroke-dasharray="2 1.5" fill="none"/></svg>
<div class="r" style="left:1103px;top:359px;width:5px;height:98px;background:repeating-linear-gradient(45deg,#2a2a2a 0 1px,#1a1a1a 1px 2px)"></div>
<svg class="r" style="left:1102px;top:397px" width="7" height="20"><polygon points="1,0 7,4 1,8" fill="#4a4a4a"/><polygon points="7,10 1,14 7,18" fill="#4a4a4a"/></svg>
<svg class="r" style="left:1113px;top:20px" width="14" height="15"><path d="M1.5 5 L6 1 L8 2.5 L4 6.5 Z" fill="#aaa"/><path d="M5 4 L12.5 14" stroke="#aaa" stroke-width="1.8" stroke-linecap="round"/></svg>
<div class="t" style="left:1133px;top:24px;font-size:11.5px;line-height:11.5px;font-weight:normal;color:#d4d4d4;letter-spacing:0.1px;">Tool</div>
<svg class="r" style="left:1253px;top:23px" width="11" height="11"><path d="M2.5 3 A4 4 0 1 0 5.5 1.5" stroke="#bbb" stroke-width="1.6" fill="none"/><polygon points="0.5,1 5,0.5 3,5" fill="#bbb"/><path d="M5.5 4 L5.5 6 L7.5 7" stroke="#bbb" fill="none"/></svg>
<div class="r" style="left:1129px;top:41px;width:126px;height:187px;border-radius:6px;background:#2c2c2c;border:1px solid #3a3a3a;box-shadow:0 2px 3px #0c0c0c"></div>
<div class="r" style="left:1133px;top:45px;width:58px;height:12px;border-radius:3px;background:linear-gradient(#2c2c2c,#202020);border:1px solid #0e0e0e;box-shadow:inset 0 1px 0 rgba(255,255,255,.07);"></div>
<div class="t" style="left:1135.5px;top:47.5px;font-size:9px;line-height:9px;font-weight:bold;color:#c4c4c4;letter-spacing:0.2px;">Load Tool</div>
<div class="r" style="left:1194px;top:45px;width:58px;height:12px;border-radius:3px;background:linear-gradient(#2c2c2c,#202020);border:1px solid #0e0e0e;box-shadow:inset 0 1px 0 rgba(255,255,255,.07);"></div>
<div class="t" style="left:1196.5px;top:47.5px;font-size:9px;line-height:9px;font-weight:bold;color:#c4c4c4;letter-spacing:0.2px;">Save As</div>
<div class="r" style="left:1133px;top:60px;width:58px;height:12px;border-radius:3px;background:linear-gradient(#2c2c2c,#202020);border:1px solid #0e0e0e;box-shadow:inset 0 1px 0 rgba(255,255,255,.07);"></div>
<div class="t" style="left:1135.5px;top:62.5px;font-size:9px;line-height:9px;font-weight:bold;color:#c4c4c4;letter-spacing:0.2px;">Import</div>
<div class="r" style="left:1194px;top:60px;width:58px;height:12px;border-radius:3px;background:linear-gradient(#2c2c2c,#202020);border:1px solid #0e0e0e;box-shadow:inset 0 1px 0 rgba(255,255,255,.07);"></div>
<div class="t" style="left:1196.5px;top:62.5px;font-size:9px;line-height:9px;font-weight:bold;color:#c4c4c4;letter-spacing:0.2px;">Export</div>
<div class="r" style="left:1133px;top:75px;width:27px;height:12px;border-radius:3px;background:linear-gradient(#2c2c2c,#202020);border:1px solid #0e0e0e;box-shadow:inset 0 1px 0 rgba(255,255,255,.07);"></div>
<div class="t" style="left:1135.5px;top:77.5px;font-size:9px;line-height:9px;font-weight:bold;color:#c4c4c4;letter-spacing:0.1px;">Clone</div>
<div class="r" style="left:1163px;top:75px;width:89px;height:12px;border-radius:3px;background:linear-gradient(#2c2c2c,#202020);border:1px solid #0e0e0e;box-shadow:inset 0 1px 0 rgba(255,255,255,.07);"></div>
<div class="t" style="left:1165.5px;top:77.5px;font-size:9px;line-height:9px;font-weight:bold;color:#c4c4c4;letter-spacing:0.2px;">Make PolyMesh3D</div>
<div class="t" style="left:1135.5px;top:91.5px;font-size:9px;line-height:9px;font-weight:bold;color:#c4c4c4;letter-spacing:0.3px;">head4. 49</div>
<div class="r" style="left:1135px;top:101px;width:103px;height:1px;background:linear-gradient(90deg,rgba(90,90,90,0),#5a5a5a 20%,#5a5a5a 80%,rgba(90,90,90,0))"></div>
<div class="r" style="left:1226px;top:99px;width:12px;height:5px;border-radius:3px;background:linear-gradient(#ff9a2a,#e06a00)"></div>
<div class="r" style="left:1240px;top:91px;width:12px;height:12px;border-radius:3px;background:linear-gradient(#2c2c2c,#202020);border:1px solid #0e0e0e;box-shadow:inset 0 1px 0 rgba(255,255,255,.07);"></div>
<div class="t" style="left:1243.5px;top:93.5px;font-size:9px;line-height:9px;font-weight:bold;color:#c4c4c4;letter-spacing:0px;">R</div>
<div class="r" style="left:1133px;top:106px;width:59px;height:59px;background:#3a3a3a;border-radius:2px;box-shadow:0 0 0 1px #1e1e1e"></div>
<div class="r" style="left:1133px;top:158px;width:59px;height:7px;background:#262626"></div>
<div class="t" style="left:1133px;top:158px;width:59px;text-align:center;font-size:8px;line-height:8px;color:#6a6a6a">head4</div>
<div class="r" style="left:1137.8px;top:142.3px;width:4.4px;height:4.4px;border-radius:50%;background:radial-gradient(circle at 35% 35%,#e06a50,#8a2a1a)"></div>
<div class="r" style="left:1153.3px;top:147.10000000000002px;width:4.4px;height:4.4px;border-radius:50%;background:radial-gradient(circle at 35% 35%,#e06a50,#8a2a1a)"></div>
<div class="r" style="left:1167.3999999999999px;top:147.8px;width:4.4px;height:4.4px;border-radius:50%;background:radial-gradient(circle at 35% 35%,#e06a50,#8a2a1a)"></div>
<div class="r" style="left:1178.3999999999999px;top:139.5px;width:4.4px;height:4.4px;border-radius:50%;background:radial-gradient(circle at 35% 35%,#e06a50,#8a2a1a)"></div>
<div class="r" style="left:1182.8px;top:106.3px;width:4.4px;height:4.4px;border-radius:50%;background:radial-gradient(circle at 35% 35%,#e06a50,#8a2a1a)"></div>
<div class="r" style="left:1194px;top:106px;width:59px;height:29px;background:#2a2a2a"></div>
<div class="r" style="left:1194px;top:136px;width:59px;height:29px;background:#2a2a2a"></div>
<div class="r" style="left:1133px;top:166px;width:59px;height:29px;background:#2a2a2a"></div>
<div class="r" style="left:1194px;top:166px;width:59px;height:29px;background:#2a2a2a"></div>
<div class="t" style="left:1194px;top:127.5px;width:59px;text-align:center;font-size:8px;line-height:8px;color:#b0b0b0;letter-spacing:-0.1px">SimpleBrush</div>
<div class="t" style="left:1194px;top:157.5px;width:59px;text-align:center;font-size:8px;line-height:8px;color:#b0b0b0;letter-spacing:-0.1px">Sphere3D</div>
<div class="t" style="left:1133px;top:187.5px;width:59px;text-align:center;font-size:8px;line-height:8px;color:#b0b0b0;letter-spacing:-0.1px">ZSphere</div>
<div class="t" style="left:1194px;top:187.5px;width:59px;text-align:center;font-size:8px;line-height:8px;color:#b0b0b0;letter-spacing:-0.1px">PolyMesh3D</div>
<svg class="r" style="left:1212px;top:105px" width="22" height="21"><defs><linearGradient id="gS" x1="0" y1="0" x2="0" y2="1"><stop offset="0" stop-color="#ffc830"/><stop offset=".45" stop-color="#f09000"/><stop offset="1" stop-color="#b05000"/></linearGradient></defs><path d="M17 4 Q11 0.5 7.5 3.5 Q5 6.5 10.5 9.5 Q16 12.5 14.5 15.5 Q12 19 6 16.5" stroke="url(#gS)" stroke-width="5" fill="none" stroke-linecap="round"/><path d="M8 4 Q10 2.5 13 3" stroke="#ffe890" stroke-width="1.2" fill="none" opacity=".8"/><path d="M12 11 Q14.5 12.5 13.5 14.5" stroke="#ffe070" stroke-width="1.2" fill="none" opacity=".7"/></svg>
<div class="r" style="left:1214px;top:138.5px;width:17px;height:17px;border-radius:50%;background:radial-gradient(circle at 50% 45%,#c86050,#983424 45%,#6a1c10 85%,#4a1008)"></div>
<div class="r" style="left:1154.5px;top:169px;width:17px;height:17px;border-radius:50%;background:radial-gradient(circle at 50% 30%,#c02020,#8a0808 60%,#4a0000)"></div>
<svg class="r" style="left:1213px;top:168px" width="20" height="20"><polygon points="10,0 12,7 19,5 14,10 19,16 12,13 10,20 8,13 1,16 6,10 1,5 8,7" fill="#983828"/><polygon points="10,4 11,9 15,10 11,11 10,16 9,11 5,10 9,9" fill="#b85848"/></svg>
<div class="r" style="left:1133px;top:197px;width:59px;height:29px;background:#3a3a3a;border-radius:2px;box-shadow:0 0 0 1px #1e1e1e"></div>
<div class="r" style="left:1133px;top:219px;width:59px;height:7px;background:#262626"></div>
<div class="t" style="left:1133px;top:218.5px;width:59px;text-align:center;font-size:8px;line-height:8px;color:#b8b8b8">head4</div>
<svg class="r" style="left:1154px;top:198px" width="18" height="20"><path d="M5 1 L11 3 L12 8 L15 12 L14 18 L6 18 L4 12 L3 6 Z" fill="#a83020"/><path d="M6 10 L6 17 M8.5 11 L8.5 17.5 M11 11 L11 17.5 M13 12 L13 17" stroke="#6a1a10" stroke-width=".8"/></svg>
<div class="t" style="left:1135px;top:239px;font-size:9px;line-height:9px;font-weight:bold;color:#dedede;letter-spacing:0px;">SubTool</div>
<div class="t" style="left:1135px;top:257.5px;font-size:9px;line-height:9px;font-weight:bold;color:#dedede;letter-spacing:0.1px;">Layers</div>
<div class="r" style="left:1129px;top:274px;width:127px;height:199px;border-radius:6px;background:#2e2e2e;border:1px solid #383838;box-shadow:0 2px 3px #0c0c0c"></div>
<div class="r" style="left:1130px;top:275px;width:127px;height:11px;border-radius:5px 5px 0 0;background:#262626;border-bottom:1px solid #3c3c3c"></div>
<div class="t" style="left:1135px;top:276px;font-size:9px;line-height:9px;font-weight:bold;color:#8c8c8c;letter-spacing:0.1px;">Geometry</div>
<div class="r" style="left:1133px;top:289px;width:58px;height:12px;border-radius:3px;background:linear-gradient(#2c2c2c,#202020);border:1px solid #0e0e0e;box-shadow:inset 0 1px 0 rgba(255,255,255,.07);"></div>
<div class="t" style="left:1135.5px;top:292px;font-size:9px;line-height:9px;font-weight:bold;color:#c4c4c4;letter-spacing:0.2px;">Lower&nbsp;&nbsp;Res</div>
<div class="r" style="left:1194px;top:289px;width:58px;height:12px;border-radius:3px;background:linear-gradient(#2c2c2c,#202020);border:1px solid #0e0e0e;box-shadow:inset 0 1px 0 rgba(255,255,255,.07);"></div>
<div class="t" style="left:1196.5px;top:292px;font-size:9px;line-height:9px;font-weight:bold;color:#c4c4c4;letter-spacing:0.2px;">Higher&nbsp;&nbsp;Res</div>
<div class="t" style="left:1135.5px;top:306px;font-size:9px;line-height:9px;font-weight:bold;color:#b4b4b4;letter-spacing:0.2px;">SDiv 4</div>
<div class="t" style="left:1227px;top:309px;font-size:9px;line-height:9px;font-weight:bold;color:#b4b4b4;letter-spacing:0.1px;">Cage</div>
<div class="r" style="left:1135px;top:316px;width:87px;height:1px;background:linear-gradient(90deg,rgba(90,90,90,0),#5a5a5a 20%,#5a5a5a 80%,rgba(90,90,90,0))"></div>
<div class="r" style="left:1186px;top:314px;width:19px;height:5px;border-radius:3px;background:linear-gradient(#ff9a2a,#e06a00)"></div>
<div class="r" style="left:1133px;top:320px;width:58px;height:12px;border-radius:3px;background:linear-gradient(#2c2c2c,#202020);border:1px solid #0e0e0e;box-shadow:inset 0 1px 0 rgba(255,255,255,.07);"></div>
<div class="t" style="left:1135.5px;top:322.5px;font-size:9px;line-height:9px;font-weight:bold;color:#c4c4c4;letter-spacing:0.2px;">Del&nbsp;&nbsp;Lower</div>
<div class="r" style="left:1194px;top:320px;width:58px;height:12px;border-radius:3px;background:linear-gradient(#2c2c2c,#202020);border:1px solid #0e0e0e;box-shadow:inset 0 1px 0 rgba(255,255,255,.07);"></div>
<div class="t" style="left:1196.5px;top:322.5px;font-size:9px;line-height:9px;font-weight:bold;color:#c4c4c4;letter-spacing:0.2px;">Del&nbsp;&nbsp;Higher</div>
<div class="r" style="left:1133px;top:343px;width:58px;height:12px;border-radius:3px;background:linear-gradient(#2c2c2c,#202020);border:1px solid #0e0e0e;box-shadow:inset 0 1px 0 rgba(255,255,255,.07);"></div>
<div class="t" style="left:1135.5px;top:345.5px;font-size:9px;line-height:9px;font-weight:bold;color:#c4c4c4;letter-spacing:0.2px;">Divide</div>
<div class="r" style="left:1194px;top:343px;width:27px;height:12px;border-radius:3px;background:linear-gradient(#f67e0c,#ea7002);border:1px solid #2a1000;box-shadow:inset 0 1px 0 rgba(255,190,110,.25);"></div>
<div class="t" style="left:1197px;top:345.5px;font-size:9px;line-height:9px;font-weight:bold;color:#2a1200;letter-spacing:0.2px;">Smt</div>
<div class="t" style="left:1227px;top:345.5px;font-size:9px;line-height:9px;font-weight:bold;color:#b4b4b4;letter-spacing:0.2px;">Suv</div>
<div class="r" style="left:1133px;top:358px;width:58px;height:12px;border-radius:3px;background:linear-gradient(#2c2c2c,#202020);border:1px solid #0e0e0e;box-shadow:inset 0 1px 0 rgba(255,255,255,.07);"></div>
<div class="t" style="left:1135.5px;top:360.5px;font-size:9px;line-height:9px;font-weight:bold;color:#c4c4c4;letter-spacing:0.2px;">Edge&nbsp;&nbsp;Loop</div>
<div class="t" style="left:1196.5px;top:360.5px;font-size:9px;line-height:9px;font-weight:bold;color:#b4b4b4;letter-spacing:0.2px;">Crisp</div>
<div class="t" style="left:1227px;top:359px;font-size:9px;line-height:9px;font-weight:bold;color:#4a4a4a;letter-spacing:0.2px;">Disp</div>
<div class="r" style="left:1226px;top:369px;width:26px;height:1px;background:linear-gradient(90deg,rgba(90,90,90,0),#5a5a5a 20%,#5a5a5a 80%,rgba(90,90,90,0))"></div>
<div class="r" style="left:1233px;top:367px;width:12px;height:5px;border-radius:3px;background:#6a3a10"></div>
<div class="r" style="left:1133px;top:381px;width:58px;height:12px;border-radius:3px;background:linear-gradient(#2c2c2c,#202020);border:1px solid #0e0e0e;box-shadow:inset 0 1px 0 rgba(255,255,255,.07);"></div>
<div class="t" style="left:1135.5px;top:383.5px;font-size:9px;line-height:9px;font-weight:bold;color:#c4c4c4;letter-spacing:0.2px;">Crease</div>
<div class="t" style="left:1196.5px;top:381.5px;font-size:9px;line-height:9px;font-weight:bold;color:#b4b4b4;letter-spacing:0.1px;">CreaseLvl 15</div>
<div class="r" style="left:1196px;top:392px;width:58px;height:1px;background:linear-gradient(90deg,rgba(90,90,90,0),#5a5a5a 20%,#5a5a5a 80%,rgba(90,90,90,0))"></div>
<div class="r" style="left:1242px;top:390px;width:12px;height:5px;border-radius:3px;background:linear-gradient(#ff9a2a,#e06a00)"></div>
<div class="r" style="left:1133px;top:396px;width:119px;height:12px;border-radius:3px;background:linear-gradient(#2c2c2c,#202020);border:1px solid #0e0e0e;box-shadow:inset 0 1px 0 rgba(255,255,255,.07);"></div>
<div class="t" style="left:1135.5px;top:398.5px;font-size:9px;line-height:9px;font-weight:bold;color:#c4c4c4;letter-spacing:0.2px;">UnCrease</div>
<div class="r" style="left:1133px;top:419px;width:119px;height:12px;border-radius:3px;background:linear-gradient(#2c2c2c,#202020);border:1px solid #0e0e0e;box-shadow:inset 0 1px 0 rgba(255,255,255,.07);"></div>
<div class="t" style="left:1135.5px;top:421.5px;font-size:9px;line-height:9px;font-weight:bold;color:#c4c4c4;letter-spacing:0.1px;">Reproject&nbsp;&nbsp;Higher&nbsp;&nbsp;Subdiv</div>
<div class="r" style="left:1133px;top:442px;width:119px;height:11px;border-radius:3px;background:#262626;border:1px solid #1e1e1e;"></div>
<div class="t" style="left:1135.5px;top:444.5px;font-size:9px;line-height:9px;font-weight:bold;color:#484848;letter-spacing:0.1px;">Reconstruct&nbsp;&nbsp;Subdiv</div>
<div class="r" style="left:1133px;top:457px;width:58px;height:12px;border-radius:3px;background:linear-gradient(#2c2c2c,#202020);border:1px solid #0e0e0e;box-shadow:inset 0 1px 0 rgba(255,255,255,.07);"></div>
<div class="t" style="left:1135.5px;top:459.5px;font-size:9px;line-height:9px;font-weight:bold;color:#c4c4c4;letter-spacing:0.2px;">DelHidden</div>
<div class="r" style="left:1194px;top:457px;width:58px;height:12px;border-radius:3px;background:linear-gradient(#2c2c2c,#202020);border:1px solid #0e0e0e;box-shadow:inset 0 1px 0 rgba(255,255,255,.07);"></div>
<div class="t" style="left:1196.5px;top:459.5px;font-size:9px;line-height:9px;font-weight:bold;color:#c4c4c4;letter-spacing:0.2px;">InsertMesh</div>
<div class="t" style="left:1135px;top:483.3px;font-size:9px;line-height:9px;font-weight:bold;color:#dedede;letter-spacing:0.1px;">Geometry&nbsp;&nbsp;HD</div>
<div class="t" style="left:1135px;top:501.63px;font-size:9px;line-height:9px;font-weight:bold;color:#dedede;letter-spacing:0.1px;">Preview</div>
<div class="t" style="left:1135px;top:519.96px;font-size:9px;line-height:9px;font-weight:bold;color:#dedede;letter-spacing:0.1px;">Deformation</div>
<div class="t" style="left:1135px;top:538.29px;font-size:9px;line-height:9px;font-weight:bold;color:#dedede;letter-spacing:0.1px;">Masking</div>
<div class="t" style="left:1135px;top:556.62px;font-size:9px;line-height:9px;font-weight:bold;color:#dedede;letter-spacing:0.1px;">Polygroups</div>
<div class="t" style="left:1135px;top:574.95px;font-size:9px;line-height:9px;font-weight:bold;color:#dedede;letter-spacing:0.1px;">Texture</div>
<div class="t" style="left:1135px;top:593.28px;font-size:9px;line-height:9px;font-weight:bold;color:#dedede;letter-spacing:0.1px;">Morph&nbsp;&nbsp;Target</div>
<div class="t" style="left:1135px;top:611.61px;font-size:9px;line-height:9px;font-weight:bold;color:#dedede;letter-spacing:0.1px;">Displacement</div>
<div class="t" style="left:1135px;top:629.94px;font-size:9px;line-height:9px;font-weight:bold;color:#dedede;letter-spacing:0.1px;">NormalMap</div>
<div class="t" style="left:1135px;top:648.27px;font-size:9px;line-height:9px;font-weight:bold;color:#dedede;letter-spacing:0.1px;">Unified&nbsp;&nbsp;Skin</div>
<div class="t" style="left:1135px;top:666.6px;font-size:9px;line-height:9px;font-weight:bold;color:#dedede;letter-spacing:0.1px;">Display&nbsp;&nbsp;Properties</div>
<div class="t" style="left:1135px;top:684.9300000000001px;font-size:9px;line-height:9px;font-weight:bold;color:#dedede;letter-spacing:0.1px;">Import</div>
<div class="t" style="left:1135px;top:703.26px;font-size:9px;line-height:9px;font-weight:bold;color:#dedede;letter-spacing:0.1px;">Export</div>
<svg class="r" style="left:0;top:0" width="1280" height="800">
<defs>
<linearGradient id="gskin" x1="0" y1="150" x2="0" y2="740" gradientUnits="userSpaceOnUse">
<stop offset="0" stop-color="#a85e3e"/>
<stop offset=".22" stop-color="#9e5a44"/>
<stop offset=".5" stop-color="#955650"/>
<stop offset=".68" stop-color="#92523a"/>
<stop offset=".85" stop-color="#844830"/>
<stop offset="1" stop-color="#62301e"/>
</linearGradient>
<radialGradient id="ghl" cx="555" cy="440" r="120" gradientUnits="userSpaceOnUse">
<stop offset="0" stop-color="#b88080" stop-opacity=".45"/>
<stop offset="1" stop-color="#b88080" stop-opacity="0"/>
</radialGradient>
<radialGradient id="ghl2" cx="470" cy="265" r="90" gradientUnits="userSpaceOnUse">
<stop offset="0" stop-color="#b87a74" stop-opacity=".4"/>
<stop offset="1" stop-color="#b87a74" stop-opacity="0"/>
</radialGradient>
<linearGradient id="gnail" x1="0" y1="0" x2="0" y2="1">
<stop offset="0" stop-color="#787060"/><stop offset=".45" stop-color="#686050"/><stop offset="1" stop-color="#464036"/>
</linearGradient>
<filter id="fin" filterUnits="userSpaceOnUse" x="0" y="0" width="1280" height="800">
<feGaussianBlur in="SourceAlpha" stdDeviation="4" result="b"/>
<feComposite in="SourceAlpha" in2="b" operator="arithmetic" k1="0" k2="1" k3="-1" k4="0" result="edge"/>
<feFlood flood-color="#1a0800" flood-opacity="1"/>
<feComposite in2="edge" operator="in" result="sh"/>
<feMerge><feMergeNode in="SourceGraphic"/><feMergeNode in="sh"/><feMergeNode in="sh"/></feMerge>
</filter>
<filter id="blur2" filterUnits="userSpaceOnUse" x="0" y="0" width="1280" height="800"><feGaussianBlur stdDeviation="2"/></filter>
<filter id="blur3" filterUnits="userSpaceOnUse" x="0" y="0" width="1280" height="800"><feGaussianBlur stdDeviation="3"/></filter>
<filter id="blur6" filterUnits="userSpaceOnUse" x="0" y="0" width="1280" height="800"><feGaussianBlur stdDeviation="6"/></filter>
<filter id="blur10" filterUnits="userSpaceOnUse" x="0" y="0" width="1280" height="800"><feGaussianBlur stdDeviation="10"/></filter>
<filter id="noise" filterUnits="userSpaceOnUse" x="360" y="140" width="420" height="610">
<feTurbulence type="fractalNoise" baseFrequency="0.55" numOctaves="2" seed="3"/>
<feColorMatrix type="matrix" values="0 0 0 0 0.1  0 0 0 0 0.05  0 0 0 0 0.03  0 0 0 -1.6 1.05"/>
</filter>
<clipPath id="chand"><path d="M374,236 C374.0,231.5 375.7,224.7 378,219 C380.3,213.3 384.2,206.7 388,202 C391.8,197.3 394.7,194.8 401,191 C407.3,187.2 417.2,183.2 426,179 C434.8,174.8 444.7,169.5 454,166 C463.3,162.5 472.7,160.1 482,158 C491.3,155.9 502.2,154.2 510,153.5 C517.8,152.8 523.0,152.6 529,154 C535.0,155.4 540.7,156.7 546,162 C551.3,167.3 556.0,178.0 561,186 C566.0,194.0 571.0,201.5 576,210 C581.0,218.5 587.0,230.0 591,237 C595.0,244.0 597.0,245.5 600,252 C603.0,258.5 605.5,269.0 609,276 C612.5,283.0 616.5,289.0 621,294 C625.5,299.0 629.5,301.5 636,306 C642.5,310.5 652.5,316.0 660,321 C667.5,326.0 675.0,330.5 681,336 C687.0,341.5 691.5,347.7 696,354 C700.5,360.3 704.2,367.5 708,374 C711.8,380.5 715.7,387.5 719,393 C722.3,398.5 724.8,403.5 728,407 C731.2,410.5 735.2,411.5 738,414 C740.8,416.5 743.2,418.3 745,422 C746.8,425.7 748.0,431.3 749,436 C750.0,440.7 750.5,445.5 751,450 C751.5,454.5 750.5,459.7 752,463 C753.5,466.3 757.7,466.7 760,470 C762.3,473.3 765.3,479.8 766,483 C766.7,486.2 765.2,487.5 764,489 C762.8,490.5 761.3,490.7 759,492 C756.7,493.3 753.8,496.3 750,497 C746.2,497.7 740.7,497.7 736,496 C731.3,494.3 725.7,490.2 722,487 C718.3,483.8 716.5,480.2 714,477 C711.5,473.8 708.8,470.7 707,468 C705.2,465.3 704.2,464.0 703,461 C701.8,458.0 702.0,452.3 700,450 C698.0,447.7 693.2,448.2 691,447 C688.8,445.8 688.5,442.2 687,443 C685.5,443.8 683.2,448.2 682,452 C680.8,455.8 680.2,460.7 680,466 C679.8,471.3 680.0,478.2 681,484 C682.0,489.8 683.7,493.3 686,501 C688.3,508.7 692.0,520.2 695,530 C698.0,539.8 701.2,548.7 704,560 C706.8,571.3 708.2,586.3 712,598 C715.8,609.7 723.0,620.3 727,630 C731.0,639.7 734.3,649.0 736,656 C737.7,663.0 738.0,667.5 737,672 C736.0,676.5 733.5,680.8 730,683 C726.5,685.2 721.0,687.2 716,685 C711.0,682.8 704.3,675.5 700,670 C695.7,664.5 693.3,659.8 690,652 C686.7,644.2 683.5,632.0 680,623 C676.5,614.0 672.7,607.0 669,598 C665.3,589.0 662.8,577.8 658,569 C653.2,560.2 642.2,545.0 640,545 C637.8,545.0 643.2,559.0 645,569 C646.8,579.0 648.8,593.0 651,605 C653.2,617.0 655.0,629.0 658,641 C661.0,653.0 666.3,665.5 669,677 C671.7,688.5 674.0,701.5 674,710 C674.0,718.5 672.0,723.5 669,728 C666.0,732.5 661.2,738.2 656,737 C650.8,735.8 642.5,727.8 638,721 C633.5,714.2 632.3,706.3 629,696 C625.7,685.7 622.3,671.2 618,659 C613.7,646.8 607.2,635.0 603,623 C598.8,611.0 597.7,597.8 593,587 C588.3,576.2 577.5,558.5 575,558 C572.5,557.5 577.0,572.7 578,584 C579.0,595.3 579.7,612.0 581,626 C582.3,640.0 584.7,655.5 586,668 C587.3,680.5 589.5,692.5 589,701 C588.5,709.5 586.2,715.0 583,719 C579.8,723.0 574.8,727.0 570,725 C565.2,723.0 557.8,712.7 554,707 C550.2,701.3 549.8,699.0 547,691 C544.2,683.0 539.5,669.8 537,659 C534.5,648.2 533.8,636.8 532,626 C530.2,615.2 528.0,604.2 526,594 C524.0,583.8 521.7,566.2 520,565 C518.3,563.8 516.8,576.8 516,587 C515.2,597.2 515.8,612.5 515,626 C514.2,639.5 512.7,657.7 511,668 C509.3,678.3 508.5,683.3 505,688 C501.5,692.7 494.0,695.5 490,696 C486.0,696.5 483.7,694.5 481,691 C478.3,687.5 475.7,682.0 474,675 C472.3,668.0 471.8,659.8 471,649 C470.2,638.2 469.0,622.0 469,610 C469.0,598.0 472.0,587.8 471,577 C470.0,566.2 465.7,556.2 463,545 C460.3,533.8 456.8,519.2 455,510 C453.2,500.8 453.3,498.0 452,490 C450.7,482.0 448.8,471.7 447,462 C445.2,452.3 442.7,441.5 441,432 C439.3,422.5 437.2,413.2 437,405 C436.8,396.8 438.7,389.2 440,383 C441.3,376.8 444.7,373.2 445,368 C445.3,362.8 443.8,357.3 442,352 C440.2,346.7 437.3,340.7 434,336 C430.7,331.3 426.0,328.7 422,324 C418.0,319.3 413.3,312.7 410,308 C406.7,303.3 404.7,301.3 402,296 C399.3,290.7 396.7,282.3 394,276 C391.3,269.7 388.7,263.0 386,258 C383.3,253.0 380.0,249.7 378,246 C376.0,242.3 374.0,240.5 374,236 Z"/></clipPath>
</defs>
<g filter="url(#fin)">
<path d="M374,236 C374.0,231.5 375.7,224.7 378,219 C380.3,213.3 384.2,206.7 388,202 C391.8,197.3 394.7,194.8 401,191 C407.3,187.2 417.2,183.2 426,179 C434.8,174.8 444.7,169.5 454,166 C463.3,162.5 472.7,160.1 482,158 C491.3,155.9 502.2,154.2 510,153.5 C517.8,152.8 523.0,152.6 529,154 C535.0,155.4 540.7,156.7 546,162 C551.3,167.3 556.0,178.0 561,186 C566.0,194.0 571.0,201.5 576,210 C581.0,218.5 587.0,230.0 591,237 C595.0,244.0 597.0,245.5 600,252 C603.0,258.5 605.5,269.0 609,276 C612.5,283.0 616.5,289.0 621,294 C625.5,299.0 629.5,301.5 636,306 C642.5,310.5 652.5,316.0 660,321 C667.5,326.0 675.0,330.5 681,336 C687.0,341.5 691.5,347.7 696,354 C700.5,360.3 704.2,367.5 708,374 C711.8,380.5 715.7,387.5 719,393 C722.3,398.5 724.8,403.5 728,407 C731.2,410.5 735.2,411.5 738,414 C740.8,416.5 743.2,418.3 745,422 C746.8,425.7 748.0,431.3 749,436 C750.0,440.7 750.5,445.5 751,450 C751.5,454.5 750.5,459.7 752,463 C753.5,466.3 757.7,466.7 760,470 C762.3,473.3 765.3,479.8 766,483 C766.7,486.2 765.2,487.5 764,489 C762.8,490.5 761.3,490.7 759,492 C756.7,493.3 753.8,496.3 750,497 C746.2,497.7 740.7,497.7 736,496 C731.3,494.3 725.7,490.2 722,487 C718.3,483.8 716.5,480.2 714,477 C711.5,473.8 708.8,470.7 707,468 C705.2,465.3 704.2,464.0 703,461 C701.8,458.0 702.0,452.3 700,450 C698.0,447.7 693.2,448.2 691,447 C688.8,445.8 688.5,442.2 687,443 C685.5,443.8 683.2,448.2 682,452 C680.8,455.8 680.2,460.7 680,466 C679.8,471.3 680.0,478.2 681,484 C682.0,489.8 683.7,493.3 686,501 C688.3,508.7 692.0,520.2 695,530 C698.0,539.8 701.2,548.7 704,560 C706.8,571.3 708.2,586.3 712,598 C715.8,609.7 723.0,620.3 727,630 C731.0,639.7 734.3,649.0 736,656 C737.7,663.0 738.0,667.5 737,672 C736.0,676.5 733.5,680.8 730,683 C726.5,685.2 721.0,687.2 716,685 C711.0,682.8 704.3,675.5 700,670 C695.7,664.5 693.3,659.8 690,652 C686.7,644.2 683.5,632.0 680,623 C676.5,614.0 672.7,607.0 669,598 C665.3,589.0 662.8,577.8 658,569 C653.2,560.2 642.2,545.0 640,545 C637.8,545.0 643.2,559.0 645,569 C646.8,579.0 648.8,593.0 651,605 C653.2,617.0 655.0,629.0 658,641 C661.0,653.0 666.3,665.5 669,677 C671.7,688.5 674.0,701.5 674,710 C674.0,718.5 672.0,723.5 669,728 C666.0,732.5 661.2,738.2 656,737 C650.8,735.8 642.5,727.8 638,721 C633.5,714.2 632.3,706.3 629,696 C625.7,685.7 622.3,671.2 618,659 C613.7,646.8 607.2,635.0 603,623 C598.8,611.0 597.7,597.8 593,587 C588.3,576.2 577.5,558.5 575,558 C572.5,557.5 577.0,572.7 578,584 C579.0,595.3 579.7,612.0 581,626 C582.3,640.0 584.7,655.5 586,668 C587.3,680.5 589.5,692.5 589,701 C588.5,709.5 586.2,715.0 583,719 C579.8,723.0 574.8,727.0 570,725 C565.2,723.0 557.8,712.7 554,707 C550.2,701.3 549.8,699.0 547,691 C544.2,683.0 539.5,669.8 537,659 C534.5,648.2 533.8,636.8 532,626 C530.2,615.2 528.0,604.2 526,594 C524.0,583.8 521.7,566.2 520,565 C518.3,563.8 516.8,576.8 516,587 C515.2,597.2 515.8,612.5 515,626 C514.2,639.5 512.7,657.7 511,668 C509.3,678.3 508.5,683.3 505,688 C501.5,692.7 494.0,695.5 490,696 C486.0,696.5 483.7,694.5 481,691 C478.3,687.5 475.7,682.0 474,675 C472.3,668.0 471.8,659.8 471,649 C470.2,638.2 469.0,622.0 469,610 C469.0,598.0 472.0,587.8 471,577 C470.0,566.2 465.7,556.2 463,545 C460.3,533.8 456.8,519.2 455,510 C453.2,500.8 453.3,498.0 452,490 C450.7,482.0 448.8,471.7 447,462 C445.2,452.3 442.7,441.5 441,432 C439.3,422.5 437.2,413.2 437,405 C436.8,396.8 438.7,389.2 440,383 C441.3,376.8 444.7,373.2 445,368 C445.3,362.8 443.8,357.3 442,352 C440.2,346.7 437.3,340.7 434,336 C430.7,331.3 426.0,328.7 422,324 C418.0,319.3 413.3,312.7 410,308 C406.7,303.3 404.7,301.3 402,296 C399.3,290.7 396.7,282.3 394,276 C391.3,269.7 388.7,263.0 386,258 C383.3,253.0 380.0,249.7 378,246 C376.0,242.3 374.0,240.5 374,236 Z" fill="url(#gskin)"/>
<g clip-path="url(#chand)">
<rect x="360" y="140" width="420" height="600" fill="url(#ghl)"/>
<rect x="360" y="140" width="420" height="600" fill="url(#ghl2)"/>
<!-- wrist top lighter orange -->
<ellipse cx="470" cy="195" rx="80" ry="30" fill="#b87050" opacity=".5" filter="url(#blur10)"/>
<!-- vein ridge on wrist -->
<path d="M530 175 Q544 210 556 238 Q566 258 574 280" stroke="#c08a84" stroke-width="6" fill="none" filter="url(#blur3)" opacity=".6"/>
<path d="M560 195 Q580 240 600 285" stroke="#4a2214" stroke-width="12" fill="none" filter="url(#blur6)" opacity=".4"/>
<!-- dark left side of wrist -->
<path d="M376 240 Q390 275 410 305 Q430 335 446 365" stroke="#2a1006" stroke-width="16" fill="none" filter="url(#blur6)" opacity=".7"/>
<path d="M442 360 Q445 420 458 500 L470 560" stroke="#4a2210" stroke-width="12" fill="none" filter="url(#blur10)" opacity=".5"/>
<!-- wrist crease -->
<path d="M440 340 Q500 360 600 330" stroke="#6a3a2a" stroke-width="8" fill="none" filter="url(#blur10)" opacity=".35"/>
<!-- knuckle shading -->
<path d="M458 540 Q500 560 530 560 Q560 556 590 550 Q620 545 662 525" stroke="#4a2214" stroke-width="18" fill="none" filter="url(#blur10)" opacity=".45"/>
<g fill="#2a1008" opacity=".55" filter="url(#blur3)">
<ellipse cx="521" cy="562" rx="5" ry="9"/><ellipse cx="575" cy="556" rx="5" ry="9"/><ellipse cx="640" cy="544" rx="5" ry="9"/>
</g>
<!-- right-side darker hand edge -->
<path d="M620 300 Q680 350 700 400 Q690 450 690 500 Q700 540 720 600" stroke="#4a2214" stroke-width="14" fill="none" filter="url(#blur10)" opacity=".45"/>
<!-- finger highlights -->
<path d="M484 590 L486 660" stroke="#b88068" stroke-width="9" fill="none" filter="url(#blur6)" opacity=".4"/>
<path d="M548 590 L560 680" stroke="#b88068" stroke-width="10" fill="none" filter="url(#blur6)" opacity=".4"/>
<path d="M612 585 L640 690" stroke="#b88068" stroke-width="10" fill="none" filter="url(#blur6)" opacity=".4"/>
<path d="M675 560 L708 645" stroke="#b88068" stroke-width="10" fill="none" filter="url(#blur6)" opacity=".4"/>
<!-- joint creases -->
<g stroke="#4a2214" stroke-width="2.5" fill="none" opacity=".55" filter="url(#blur2)">
<path d="M472 625 Q492 632 512 622"/><path d="M474 600 Q494 606 514 598"/>
<path d="M534 635 Q555 645 580 636"/><path d="M536 648 Q556 656 582 648"/>
<path d="M607 622 Q628 632 652 620"/><path d="M610 633 Q630 642 656 630"/>
<path d="M672 600 Q695 608 716 595"/><path d="M676 612 Q698 620 720 606"/>
<path d="M478 662 Q492 668 508 660"/><path d="M550 690 Q565 696 584 688"/><path d="M628 688 Q648 696 668 684"/><path d="M696 650 Q712 656 730 645"/>
</g>
<!-- back-of-hand tendons -->
<g fill="none" filter="url(#blur6)">
<path d="M462 380 Q462 460 478 545" stroke="#a86040" stroke-width="22" opacity=".55"/>
<path d="M540 405 Q545 470 548 540" stroke="#5a2c20" stroke-width="16" opacity=".32"/>
<path d="M592 420 Q598 470 604 525" stroke="#5a2c20" stroke-width="14" opacity=".3"/>
<path d="M648 430 Q665 480 675 525" stroke="#5a2c20" stroke-width="12" opacity=".35"/>
<path d="M495 400 Q505 460 515 530" stroke="#c89090" stroke-width="20" opacity=".35"/>
<path d="M565 378 Q595 445 622 515" stroke="#c89090" stroke-width="12" opacity=".45"/>
<path d="M618 405 Q640 445 658 488" stroke="#c89090" stroke-width="10" opacity=".4"/>
<path d="M470 300 Q540 330 610 330" stroke="#5a2c20" stroke-width="20" opacity=".25"/>
</g>
<g stroke="#d0a0a0" stroke-width="3" fill="none" opacity=".2" filter="url(#blur2)">
<path d="M570 385 Q598 450 620 512"/><path d="M598 320 Q640 345 680 372"/><path d="M620 408 Q640 445 656 486"/>
</g>
<!-- thumb shading -->
<path d="M684 372 Q692 405 690 440" stroke="#2a1008" stroke-width="12" fill="none" filter="url(#blur6)" opacity=".5"/>
<ellipse cx="724" cy="432" rx="18" ry="22" fill="#b88080" opacity=".35" filter="url(#blur6)"/>
<path d="M703 458 Q720 462 740 450" stroke="#2a1008" stroke-width="3" fill="none" filter="url(#blur2)" opacity=".45"/>
<!-- finger right-edge shading -->
<g fill="none" stroke="#2a1008" stroke-width="9" opacity=".4" filter="url(#blur3)">
<path d="M521 580 Q519 640 513 690"/><path d="M584 585 Q589 650 593 705"/><path d="M649 570 Q663 650 678 712"/><path d="M707 575 Q729 620 741 665"/>
</g>
<!-- finger top highlights -->
<g fill="#c09080" opacity=".3" filter="url(#blur6)">
<ellipse cx="490" cy="605" rx="10" ry="14"/><ellipse cx="557" cy="625" rx="11" ry="14"/><ellipse cx="628" cy="612" rx="11" ry="15"/><ellipse cx="692" cy="585" rx="11" ry="14"/>
</g>
<!-- fingertips darker -->
<g fill="#3a1a0e" opacity=".45" filter="url(#blur6)">
<ellipse cx="490" cy="688" rx="16" ry="10"/><ellipse cx="570" cy="716" rx="16" ry="10"/><ellipse cx="655" cy="726" rx="16" ry="11"/><ellipse cx="722" cy="675" rx="16" ry="11"/>
</g>
<rect x="360" y="140" width="420" height="610" filter="url(#noise)" opacity=".5"/>
</g>
</g>
<path d="M477,679 C478.0,676.3 482.7,676.2 486,676 C489.3,675.8 494.7,676.3 497,678 C499.3,679.7 500.2,683.3 500,686 C499.8,688.7 498.2,692.3 496,694 C493.8,695.7 489.7,696.3 487,696 C484.3,695.7 481.7,694.8 480,692 C478.3,689.2 476.0,681.7 477,679 Z" fill="url(#gnail)" stroke="#140e0a" stroke-width="1"/><path d="M559,706 C560.5,703.2 566.0,703.2 570,703 C574.0,702.8 580.5,703.2 583,705 C585.5,706.8 585.5,711.0 585,714 C584.5,717.0 582.5,721.0 580,723 C577.5,725.0 573.2,726.5 570,726 C566.8,725.5 562.8,723.3 561,720 C559.2,716.7 557.5,708.8 559,706 Z" fill="url(#gnail)" stroke="#140e0a" stroke-width="1"/><path d="M641,711 C642.8,707.3 650.2,708.0 655,708 C659.8,708.0 667.2,708.7 670,711 C672.8,713.3 672.7,718.2 672,722 C671.3,725.8 668.8,731.5 666,734 C663.2,736.5 658.7,737.7 655,737 C651.3,736.3 646.3,734.3 644,730 C641.7,725.7 639.2,714.7 641,711 Z" fill="url(#gnail)" stroke="#140e0a" stroke-width="1"/><path d="M709,662 C711.0,658.8 717.5,659.2 722,659 C726.5,658.8 733.5,658.8 736,661 C738.5,663.2 737.8,668.3 737,672 C736.2,675.7 734.2,680.7 731,683 C727.8,685.3 721.5,686.8 718,686 C714.5,685.2 711.5,682.0 710,678 C708.5,674.0 707.0,665.2 709,662 Z" fill="url(#gnail)" stroke="#140e0a" stroke-width="1"/><path d="M752,463.5 C753.3,462.7 756.8,466.9 759,470 C761.2,473.1 764.6,478.6 765.5,482 C766.4,485.4 765.8,489.3 764.5,490.5 C763.2,491.7 759.8,491.6 757.5,489 C755.2,486.4 751.9,479.2 751,475 C750.1,470.8 750.7,464.3 752,463.5 Z" fill="url(#gnail)" stroke="#140e0a" stroke-width="1"/>
</svg>
</body></html>
